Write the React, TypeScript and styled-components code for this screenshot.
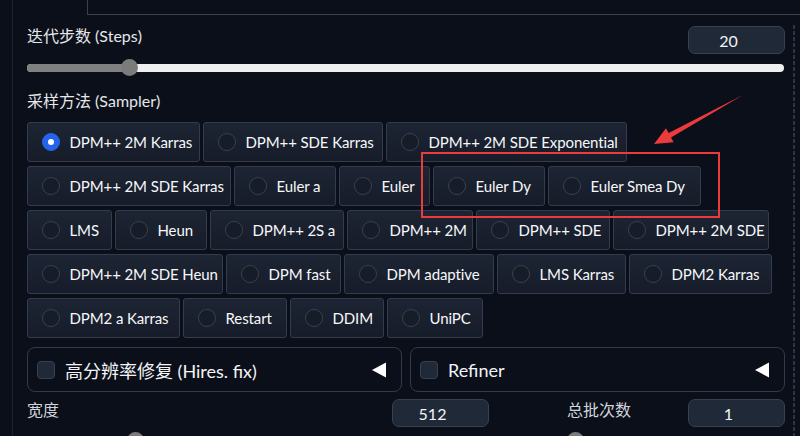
import React from 'react';
import styled, { createGlobalStyle } from 'styled-components';

const GlobalStyle = createGlobalStyle`
  html, body { margin: 0; padding: 0; background: #0b0f19; }
  body {
    width: 800px; height: 436px; overflow: hidden;
    font-family: Lato, "Noto Sans CJK SC", sans-serif;
    color: #f3f4f6;
  }
  * { box-sizing: border-box; }
`;

const Page = styled.div`
  position: relative;
  width: 800px;
  height: 436px;
  overflow: hidden;
  padding-left: 12px;
`;

const Frame = styled.div`
  height: 100%;
  border-left: 1px solid #1c2230;
`;

const TabStrip = styled.div`
  margin-left: 74px;
  height: 15px;
  border-left: 1px solid #374151;
  border-bottom: 1px solid #374151;
`;

const Column = styled.div`
  width: 782px;
  margin-top: 10px;
  padding: 1px 10px 0 14px;
  min-height: 420px;
  background: repeating-linear-gradient(to bottom, #2d3545 0 4px, transparent 4px 6px) right top / 2px 100% no-repeat;
`;

const FieldHeader = styled.div`
  display: flex;
  align-items: flex-start;
  justify-content: space-between;
  height: 28px;
`;

const FieldLabel = styled.span<{ $small?: boolean }>`
  font-size: 16px;
  line-height: ${p => (p.$small ? 22 : 20)}px;
  color: ${p => (p.$small ? '#d1d5db' : '#e5e7eb')};
  white-space: nowrap;
`;

const NumberBox = styled.div`
  width: 97px;
  height: 28px;
  border: 1px solid #374151;
  border-radius: 7px;
  background: #1f2937;
  display: flex;
  align-items: center;
  justify-content: center;
  padding-right: 16px;
  font-size: 16px;
  color: #f3f4f6;
`;

const SliderWrap = styled.div<{ $gap: number }>`
  margin-top: ${p => p.$gap}px;
  height: 17px;
  display: flex;
  align-items: center;
  padding-right: 1px;
`;

const SliderTrack = styled.div`
  position: relative;
  flex: 1;
  height: 8px;
  border-radius: 4px;
  background: #efefef;
`;

const SliderFill = styled.div`
  position: absolute;
  left: 0; top: 0; bottom: 0;
  border-radius: 4px 0 0 4px;
  background: #808080;
`;

const SliderThumb = styled.div`
  position: absolute;
  top: 50%;
  width: 17px;
  height: 17px;
  margin: -8.5px 0 0 -8.5px;
  border-radius: 50%;
  background: #7b7b7b;
`;

const SectionLabel = styled.div`
  margin-top: 15px;
  height: 20px;
  line-height: 20px;
  font-size: 16px;
  color: #e5e7eb;
`;

const SamplerGroup = styled.div`
  margin-top: 11px;
  display: flex;
  flex-direction: column;
  gap: 4px;
`;

const SamplerRow = styled.div`
  display: flex;
  gap: 3px;
`;

const RadioItem = styled.label<{ $w: number }>`
  flex: none;
  width: ${p => p.$w}px;
  display: flex;
  align-items: center;
  gap: 10px;
  height: 40px;
  padding: 0 0 0 13.5px;
  border: 1px solid #343c4b;
  border-radius: 3px;
  background: linear-gradient(to bottom, #1d2433, #161c29);
  font-size: 15px;
  letter-spacing: -0.1px;
  color: #f7f8fa;
  white-space: nowrap;
  overflow: hidden;
`;

const RadioDot = styled.span<{ $checked: boolean }>`
  flex: none;
  width: 18px;
  height: 18px;
  border-radius: 50%;
  border: 1px solid ${p => (p.$checked ? '#2563eb' : '#384152')};
  background: ${p => (p.$checked ? '#2563eb' : '#161c28')};
  display: flex;
  align-items: center;
  justify-content: center;
  &::after {
    content: '';
    width: 6px;
    height: 6px;
    border-radius: 50%;
    background: #ffffff;
    display: ${p => (p.$checked ? 'block' : 'none')};
  }
`;

const AccordionRow = styled.div`
  margin-top: 9px;
  display: grid;
  grid-template-columns: 1fr 1fr;
  gap: 8px;
`;

const Accordion = styled.div`
  height: 45px;
  border: 1px solid #313a4a;
  border-radius: 8px;
  display: flex;
  align-items: center;
  gap: 10px;
  padding: 0 15px 0 9px;
`;

const CheckBox = styled.span`
  flex: none;
  width: 18px;
  height: 18px;
  border-radius: 4px;
  border: 1px solid #374151;
  background: #1f2937;
`;

const AccordionTitle = styled.span`
  flex: 1;
  font-size: 18px;
  color: #f3f4f6;
  white-space: nowrap;
`;

const FieldsRow = styled.div`
  margin-top: 7px;
  display: flex;
  justify-content: space-between;
`;

const FieldColumn = styled.div<{ $w: number }>`
  width: ${p => p.$w}px;
`;

const Overlay = styled.svg`
  position: absolute;
  left: 0;
  top: 0;
  pointer-events: none;
`;

type Sampler = [string, number];

const rows: Sampler[][] = [
  [['DPM++ 2M Karras', 173], ['DPM++ SDE Karras', 180], ['DPM++ 2M SDE Exponential', 241]],
  [['DPM++ 2M SDE Karras', 204], ['Euler a', 102], ['Euler', 91], ['Euler Dy', 112], ['Euler Smea Dy', 153]],
  [['LMS', 85], ['Heun', 92], ['DPM++ 2S a', 134], ['DPM++ 2M', 126], ['DPM++ SDE', 134], ['DPM++ 2M SDE', 156]],
  [['DPM++ 2M SDE Heun', 196], ['DPM fast', 115], ['DPM adaptive', 150], ['LMS Karras', 129], ['DPM2 Karras', 143]],
  [['DPM2 a Karras', 153], ['Restart', 104], ['DDIM', 94], ['UniPC', 96]],
];

const Slider: React.FC<{ value: number; min: number; max: number; gap: number }> = ({ value, min, max, gap }) => {
  const f = (value - min) / (max - min);
  const pos = `calc(8.5px + ${f} * (100% - 17px))`;
  return (
    <SliderWrap $gap={gap}>
      <SliderTrack>
        <SliderFill style={{ width: pos }} />
        <SliderThumb style={{ left: pos }} />
      </SliderTrack>
    </SliderWrap>
  );
};

const Caret = () => (
  <svg width="14" height="16" viewBox="0 0 14 16">
    <polygon points="0,8 14,0.5 14,15.5" fill="#ffffff" />
  </svg>
);

export default function App() {
  const selected = 'DPM++ 2M Karras';
  return (
    <>
      <GlobalStyle />
      <Page>
        <Frame>
          <TabStrip />
          <Column>
            <FieldHeader>
              <FieldLabel>迭代步数 (Steps)</FieldLabel>
              <NumberBox>20</NumberBox>
            </FieldHeader>
            <Slider value={20} min={1} max={150} gap={5} />

            <SectionLabel>采样方法 (Sampler)</SectionLabel>
            <SamplerGroup>
              {rows.map((row, i) => (
                <SamplerRow key={i}>
                  {row.map(([name, w]) => (
                    <RadioItem key={name} $w={w}>
                      <RadioDot $checked={name === selected} />
                      {name}
                    </RadioItem>
                  ))}
                </SamplerRow>
              ))}
            </SamplerGroup>

            <AccordionRow>
              <Accordion>
                <CheckBox />
                <AccordionTitle>高分辨率修复 (Hires. fix)</AccordionTitle>
                <Caret />
              </Accordion>
              <Accordion>
                <CheckBox />
                <AccordionTitle>Refiner</AccordionTitle>
                <Caret />
              </Accordion>
            </AccordionRow>

            <FieldsRow>
              <FieldColumn $w={462}>
                <FieldHeader>
                  <FieldLabel $small>宽度</FieldLabel>
                  <NumberBox>512</NumberBox>
                </FieldHeader>
                <Slider value={512} min={64} max={2048} gap={5} />
              </FieldColumn>
              <FieldColumn $w={218}>
                <FieldHeader>
                  <FieldLabel $small>总批次数</FieldLabel>
                  <NumberBox>1</NumberBox>
                </FieldHeader>
                <Slider value={1} min={1} max={100} gap={5} />
              </FieldColumn>
            </FieldsRow>
          </Column>
        </Frame>
        <Overlay width="800" height="436" viewBox="0 0 800 436">
          <rect x="422" y="153" width="297" height="64" fill="none" stroke="#eb3b3b" strokeWidth="2" />
          <polygon
            points="654,144 666,128.3 668.6,133.1 743,95 671,137.5 673.7,142.3"
            fill="#eb3b3b"
          />
        </Overlay>
      </Page>
    </>
  );
}
